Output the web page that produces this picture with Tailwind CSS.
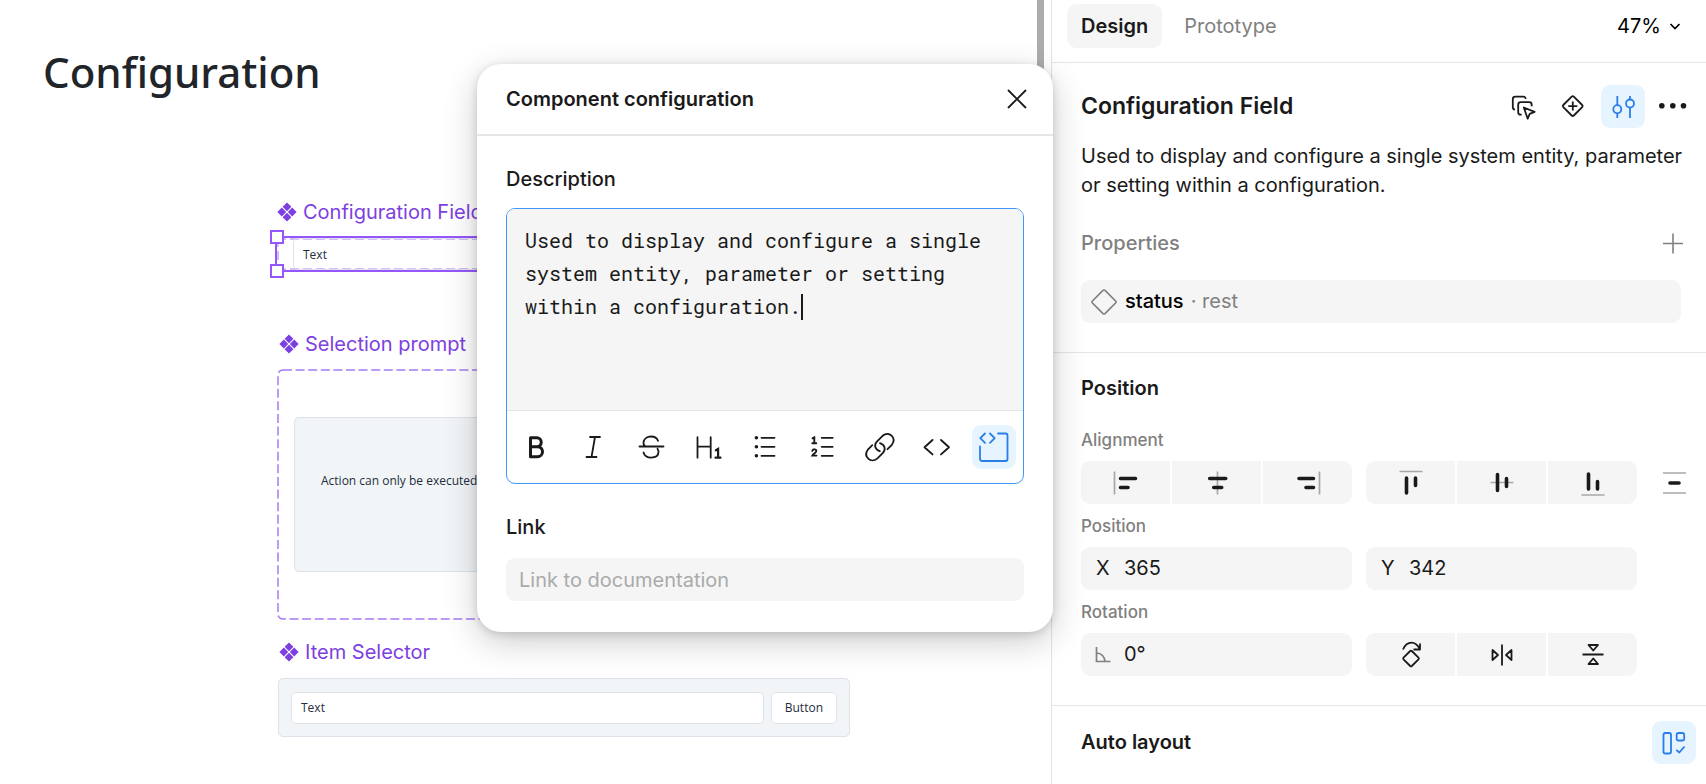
<!DOCTYPE html>
<html lang="en">
<head>
  <meta charset="UTF-8">
  <meta name="viewport" content="width=device-width, initial-scale=1.0">
  <title>Configuration</title>
  <script src="https://cdn.jsdelivr.net/npm/@tailwindcss/browser@4"></script>
</head>
<body class="bg-white font-[Inter,sans-serif] text-[#1a1a1a]">
  <!-- shared symbols -->
  <svg class="hidden">
    <symbol id="component" viewBox="0 0 20 20">
      <path d="M10 .4l4.4 4.4L10 9.2 5.6 4.800zM10 10.800l4.400 4.400-4.400 4.400-4.400-4.400zM4.800 5.600L9.200 10l-4.400 4.400L.4 10zM15.200 5.600l4.400 4.400-4.400 4.400-4.400-4.400z" fill="currentColor"/>
    </symbol>
  </svg>

  <div class="relative flex h-screen overflow-hidden">

    <!-- Canvas -->
    <main class="relative flex-1 overflow-hidden">
      <h1 class="absolute left-[43px] top-[42px] font-['Noto_Sans',sans-serif] text-[42px] leading-[60px] font-medium text-[#212529]">Configuration</h1>

      <section>
        <h2 class="absolute left-[277px] top-[198px] flex items-center gap-[6px] text-[20px] leading-[28px] whitespace-nowrap text-[#7d40e0]">
          <svg class="size-5"><use href="#component"/></svg>Configuration Field
        </h2>
        <div class="absolute left-[275px] top-[236px] h-[36px] w-[575px] border-2 border-[#9557fb]">
          <svg class="absolute inset-0 h-full w-full" fill="none" stroke="#a67bf5"><path d="M0 1h575M0 31h575M1 0v32" stroke-dasharray="9 4"/></svg>
          <label class="absolute left-[16px] top-0 flex h-[32px] w-[540px] items-center rounded-[5px] border border-[#dfe1e8] pt-[2px] pl-[9px]">
            <input type="text" value="Text" aria-label="Field value" class="w-full font-['Open_Sans',sans-serif] text-[12px] leading-[16px] text-[#1f2d3d] outline-none">
          </label>
          <span class="absolute -left-[7px] -top-[8px] size-[14px] border-2 border-[#9557fb] bg-white"></span>
          <span class="absolute -left-[7px] -bottom-[8px] size-[14px] border-2 border-[#9557fb] bg-white"></span>
        </div>
      </section>

      <section>
        <h2 class="absolute left-[279px] top-[330px] flex items-center gap-[6px] text-[20px] leading-[28px] whitespace-nowrap text-[#7d40e0]">
          <svg class="size-5"><use href="#component"/></svg>Selection prompt
        </h2>
        <div class="absolute left-[277px] top-[369px] h-[251px] w-[573px] px-[17px] py-[48px]">
          <svg class="absolute inset-0 h-full w-full" viewBox="0 0 573 251" fill="none" stroke="#a67bf5" stroke-width="1.500"><rect x="1" y="1" width="571" height="249" rx="5" stroke-dasharray="9 3.600"/></svg>
          <div class="flex h-full items-center rounded-[5px] border border-[#dfe1e8] bg-[#f1f5f8] px-[26px] pb-[28px]">
            <p class="font-['Open_Sans',sans-serif] text-[12px] leading-[16px] text-[#1f2d3d]">Action can only be executed</p>
          </div>
        </div>
      </section>

      <section>
        <h2 class="absolute left-[279px] top-[638px] flex items-center gap-[6px] text-[20px] leading-[28px] whitespace-nowrap text-[#7d40e0]">
          <svg class="size-5"><use href="#component"/></svg>Item Selector
        </h2>
        <div class="absolute left-[278px] top-[678px] flex h-[59px] w-[572px] items-center gap-[7px] rounded-[5px] border border-[#dfe1e8] bg-[#f1f5f8] px-[12px] font-['Open_Sans',sans-serif] text-[12px] leading-[16px] text-[#1f2d3d]">
          <input type="text" value="Text" aria-label="Item" class="h-[32px] min-w-0 flex-1 rounded-[5px] border border-[#dfe1e8] bg-white px-[9px] outline-none">
          <button class="h-[32px] rounded-[5px] border border-[#dfe1e8] bg-white px-[13px]">Button</button>
        </div>
      </section>

      <div class="absolute right-[7px] top-0 h-[100px] w-[7px] bg-[#acacac]"></div>
    </main>

    <!-- Properties panel -->
    <aside class="w-[655px] shrink-0 border-l border-[#e2e2e2] text-[20px] leading-[29px]">
      <header class="flex h-[63px] items-start justify-between border-b border-[#e6e6e6] pl-[15px] pr-[23px] pt-1">
        <nav class="flex gap-2">
          <button class="h-11 rounded-[9px] bg-[#f5f5f5] px-[14px] font-semibold">Design</button>
          <button class="h-11 px-[14px] text-[#808080]">Prototype</button>
        </nav>
        <button class="flex h-11 items-center gap-[6px] text-black">47%
          <svg class="size-[16px]" viewBox="0 0 16 16" fill="none" stroke="currentColor" stroke-width="1.700"><path d="M3.500 6l4.500 4.500L12.500 6"/></svg>
        </button>
      </header>

      <section class="border-b border-[#e6e6e6] pl-[29px] pr-[11px] pt-[22px] pb-[29px]">
        <div class="flex h-[43px] items-center justify-between">
          <h2 class="text-[23px] font-semibold">Configuration Field</h2>
          <div class="flex gap-[6px]">
            <button aria-label="Select matching" class="h-[43px] w-11">
              <svg class="w-full" viewBox="0 0 44 43" fill="none" stroke="currentColor" stroke-width="1.800" stroke-linejoin="round"><path d="M14 24.700c-1.300-.2-2.200-1.200-2.200-2.500v-8c0-1.400 1.100-2.500 2.500-2.500h8c1.300 0 2.300.9 2.500 2.200M20.700 29.700h-1c-1.400 0-2.500-1.100-2.500-2.500v-7.500c0-1.400 1.100-2.500 2.500-2.500h8.500c1.400 0 2.500 1.100 2.500 2.500v1.500M22.800 22.500l10.800 4.300-4.900 2.100-2 4.800z"/></svg>
            </button>
            <button aria-label="Add variant" class="h-[43px] w-11">
              <svg class="w-full" viewBox="0 0 44 43" fill="none" stroke="currentColor" stroke-width="1.800"><path d="M20.700 11.600a1.500 1.500 0 012.100 0l8.400 8.400a1.500 1.500 0 010 2.100l-8.400 8.400a1.500 1.500 0 01-2.100 0L12.300 22.100a1.500 1.500 0 010-2.100zM21.800 16.600v9M17.300 21.100h9"/></svg>
            </button>
            <button aria-label="Component configuration" class="h-[43px] w-11 rounded-[9px] bg-[#e5f4ff] text-[#2b7de9]">
              <svg class="w-full" viewBox="0 0 44 43" fill="none" stroke="currentColor" stroke-width="1.800"><path d="M16.300 11v9M16.300 28v5M29 11v3.500M29 22.500V33"/><circle cx="16.300" cy="24.200" r="4"/><circle cx="29" cy="18.500" r="4"/></svg>
            </button>
            <button aria-label="More" class="h-[43px] w-11">
              <svg class="w-full" viewBox="0 0 44 43" fill="currentColor"><circle cx="10.800" cy="20.800" r="2.800"/><circle cx="21.800" cy="20.800" r="2.800"/><circle cx="32.500" cy="20.800" r="2.800"/></svg>
            </button>
          </div>
        </div>
        <p class="mt-[14px]">Used to display and configure a single system entity, parameter or setting within a configuration.</p>
        <div class="mt-[22px] flex h-[43px] items-center justify-between text-[#808080]">
          <h3 class="font-medium">Properties</h3>
          <button aria-label="Add property" class="h-[43px] w-11">
            <svg class="w-full" viewBox="0 0 44 43" fill="none" stroke="currentColor" stroke-width="1.600"><path d="M22 11.500v20M12 21.500h20"/></svg>
          </button>
        </div>
        <button class="mt-[15px] flex h-[43px] w-[calc(100%-14px)] items-center rounded-[9px] bg-[#f5f5f5] pl-[10px]">
          <svg class="mr-[8px] size-[26px] text-[#808080]" viewBox="0 0 26 26" fill="none" stroke="currentColor" stroke-width="1.700"><path d="M12 1.400a1.400 1.400 0 012 0L24.600 12a1.400 1.400 0 010 2L14 24.600a1.400 1.400 0 01-2 0L1.400 14a1.400 1.400 0 010-2z"/></svg>
          <span class="font-medium text-black">status</span>
          <span class="ml-[7px] text-[#808080]">· rest</span>
        </button>
      </section>

      <section class="border-b border-[#e6e6e6] pl-[29px] pr-[11px] pt-[13px] pb-[29px]">
        <h2 class="mb-2 flex h-11 items-center font-semibold">Position</h2>

        <h3 class="flex h-[43px] items-center pt-[2px] text-[17px] font-medium text-[#808080]">Alignment</h3>
        <div class="grid grid-cols-[minmax(0,1fr)_minmax(0,1fr)_44px] gap-x-[14px]">
          <div class="flex gap-0.5 overflow-hidden rounded-[9px]">
            <button aria-label="Align left" class="flex h-[43px] flex-1 items-center justify-center bg-[#f5f5f5]">
              <svg class="size-11" viewBox="0 0 44 44" fill="none" stroke-linecap="round"><path d="M10.500 10.500v23" stroke="#a8a8a8" stroke-width="1.700" stroke-linecap="butt"/><path d="M16.500 17.500h15M16.500 26.500h7.500" stroke="#1a1a1a" stroke-width="3.600"/></svg>
            </button>
            <button aria-label="Align horizontal centers" class="flex h-[43px] flex-1 items-center justify-center bg-[#f5f5f5]">
              <svg class="size-11" viewBox="0 0 44 44" fill="none" stroke-linecap="round"><path d="M22.500 10.500v23" stroke="#a8a8a8" stroke-width="1.700" stroke-linecap="butt"/><path d="M14.700 17.500h16M18.700 26.500h8" stroke="#1a1a1a" stroke-width="3.600"/></svg>
            </button>
            <button aria-label="Align right" class="flex h-[43px] flex-1 items-center justify-center bg-[#f5f5f5]">
              <svg class="size-11" viewBox="0 0 44 44" fill="none" stroke-linecap="round"><path d="M33.500 10.500v23" stroke="#a8a8a8" stroke-width="1.700" stroke-linecap="butt"/><path d="M13 17.500h14.500M20 26.500h7.500" stroke="#1a1a1a" stroke-width="3.600"/></svg>
            </button>
          </div>
          <div class="flex gap-0.5 overflow-hidden rounded-[9px]">
            <button aria-label="Align top" class="flex h-[43px] flex-1 items-center justify-center bg-[#f5f5f5]">
              <svg class="size-11" viewBox="0 0 44 44" fill="none" stroke-linecap="round"><path d="M10.500 10.500h23" stroke="#a8a8a8" stroke-width="1.700" stroke-linecap="butt"/><path d="M17.500 17v15M26.500 17v7.500" stroke="#1a1a1a" stroke-width="3.600"/></svg>
            </button>
            <button aria-label="Align vertical centers" class="flex h-[43px] flex-1 items-center justify-center bg-[#f5f5f5]">
              <svg class="size-11" viewBox="0 0 44 44" fill="none" stroke-linecap="round"><path d="M10.500 21.500h23" stroke="#a8a8a8" stroke-width="1.700" stroke-linecap="butt"/><path d="M17.500 13.500v16M26.500 17.500v8" stroke="#1a1a1a" stroke-width="3.600"/></svg>
            </button>
            <button aria-label="Align bottom" class="flex h-[43px] flex-1 items-center justify-center bg-[#f5f5f5]">
              <svg class="size-11" viewBox="0 0 44 44" fill="none" stroke-linecap="round"><path d="M10.500 34h23" stroke="#a8a8a8" stroke-width="1.700" stroke-linecap="butt"/><path d="M17.500 13v15M26.500 20.500v7.500" stroke="#1a1a1a" stroke-width="3.600"/></svg>
            </button>
          </div>
          <button aria-label="Distribute" class="flex h-[43px] items-center justify-center">
            <svg class="size-11" viewBox="0 0 44 44" fill="none" stroke-linecap="round"><path d="M12 12h23M12 32h23" stroke="#a8a8a8" stroke-width="1.700" stroke-linecap="butt"/><path d="M19 22h9" stroke="#1a1a1a" stroke-width="3.600"/></svg>
          </button>
        </div>

        <h3 class="flex h-[43px] items-center pt-[2px] text-[17px] font-medium text-[#808080]">Position</h3>
        <div class="grid grid-cols-[minmax(0,1fr)_minmax(0,1fr)_44px] gap-x-[14px]">
          <label class="flex h-[43px] items-center rounded-[9px] bg-[#f5f5f5] pl-[15px]">
            <span class="w-[28px]">X</span>
            <input type="text" value="365" class="min-w-0 flex-1 outline-none">
          </label>
          <label class="flex h-[43px] items-center rounded-[9px] bg-[#f5f5f5] pl-[15px]">
            <span class="w-[28px]">Y</span>
            <input type="text" value="342" class="min-w-0 flex-1 outline-none">
          </label>
        </div>

        <h3 class="flex h-[43px] items-center pt-[2px] text-[17px] font-medium text-[#808080]">Rotation</h3>
        <div class="grid grid-cols-[minmax(0,1fr)_minmax(0,1fr)_44px] gap-x-[14px]">
          <label class="flex h-[43px] items-center rounded-[9px] bg-[#f5f5f5] pl-[13px]">
            <svg class="mr-[12px] size-[18px] text-[#808080]" viewBox="0 0 18 18" fill="none" stroke="currentColor" stroke-width="1.700"><path d="M2.500 1v14.500h14M2.500 7a8.500 8.500 0 018.500 8.500"/></svg>
            <input type="text" value="0°" aria-label="Rotation" class="min-w-0 flex-1 outline-none">
          </label>
          <div class="flex gap-0.5 overflow-hidden rounded-[9px]">
            <button aria-label="Rotate 90° right" class="flex h-[43px] flex-1 items-center justify-center bg-[#f5f5f5]">
              <svg class="size-11" viewBox="0 0 44 44" fill="none" stroke="currentColor" stroke-width="1.800" stroke-linejoin="round"><path d="M21.200 18a1.200 1.200 0 011.600 0l6.700 6.700a1.200 1.200 0 010 1.600L22.800 33a1.200 1.200 0 01-1.600 0l-6.700-6.700a1.200 1.200 0 010-1.600zM14 16.500c2-4.500 5-6.800 8.500-6.800 3.200 0 6 2 8.200 6.300M31 10.500v6h-6.500"/></svg>
            </button>
            <button aria-label="Flip horizontal" class="flex h-[43px] flex-1 items-center justify-center bg-[#f5f5f5]">
              <svg class="size-11" viewBox="0 0 44 44" fill="none" stroke="currentColor" stroke-width="1.800" stroke-linejoin="round"><path d="M22 11.500v21M12.500 17v10l5.500-5zM31.500 17v10L26 22z"/></svg>
            </button>
            <button aria-label="Flip vertical" class="flex h-[43px] flex-1 items-center justify-center bg-[#f5f5f5]">
              <svg class="size-11" viewBox="0 0 44 44" fill="none" stroke="currentColor" stroke-width="1.800" stroke-linejoin="round"><path d="M11.500 21.500h21M17.500 12h9.500l-4.700 5.500zM17.500 31h9.500l-4.700-5.500z"/></svg>
            </button>
          </div>
        </div>
      </section>

      <section class="flex items-center justify-between pl-[29px] pr-[10px] pt-[15px]">
        <h2 class="font-semibold">Auto layout</h2>
        <button aria-label="Use auto layout" class="h-[43px] w-11 rounded-[9px] bg-[#e5f4ff] text-[#2b7de9]">
          <svg class="w-full" viewBox="0 0 44 43" fill="none" stroke="currentColor" stroke-width="1.800" stroke-linejoin="round"><rect x="11.500" y="12" width="7.500" height="20.500" rx="1.800"/><rect x="24.700" y="12" width="7.500" height="7.500" rx="1.800"/><path d="M24.300 28.800l3 2.700 5.200-6"/></svg>
        </button>
      </section>
    </aside>

    <!-- Component configuration dialog -->
    <div role="dialog" aria-labelledby="dialog-title" class="absolute right-[653px] top-[64px] w-[576px] rounded-[24px] bg-white text-[20px] leading-[29px] shadow-[0_10px_34px_rgba(0,0,0,0.2),0_2px_8px_rgba(0,0,0,0.14)]">
      <header class="flex h-[72px] items-center justify-between border-b-2 border-[#e6e6e6] pl-[29px] pr-[14px]">
        <h2 id="dialog-title" class="font-semibold">Component configuration</h2>
        <button aria-label="Close" class="size-11">
          <svg class="w-full" viewBox="0 0 44 44" fill="none" stroke="currentColor" stroke-width="1.800"><path d="M13 13l18 18M31 13L13 31"/></svg>
        </button>
      </header>

      <div class="px-[29px] pt-[29px] pb-[31px]">
        <label for="description" class="block font-medium">Description</label>
        <div class="relative mt-[14px] overflow-hidden rounded-[9px] border border-[#3f98f5]">
          <textarea id="description" class="block h-[201px] w-full resize-none bg-[#f5f5f5] px-[18px] pt-[15px] font-['Roboto_Mono','DejaVu_Sans_Mono',monospace] text-[20px] leading-[33px] outline-none">Used to display and configure a single system entity, parameter or setting within a configuration.</textarea>
          <span class="absolute left-[294px] top-[85px] h-[26px] w-[2px] bg-[#1a1a1a]"></span>
          <div class="flex h-[73px] items-center justify-between border-t border-[#e6e6e6] px-[7px]">
            <button aria-label="Bold" class="size-11"><svg viewBox="0 0 44 44" fill="none" stroke="currentColor" stroke-width="3" stroke-linejoin="round"><path d="M16.500 12.800h6.300a4.300 4.300 0 010 8.900h-6.300zM16.500 21.700h7a5 5 0 010 10h-7z"/></svg></button>
            <button aria-label="Italic" class="size-11"><svg viewBox="0 0 44 44" fill="none" stroke="currentColor" stroke-width="1.800" stroke-linecap="round"><path d="M19 12h10M15.500 32h10M24 12l-3.500 20"/></svg></button>
            <button aria-label="Strikethrough" class="size-11"><svg viewBox="0 0 44 44" fill="none" stroke="currentColor" stroke-width="1.800" stroke-linecap="round"><path d="M10.500 21.500h24M15.800 21c-1.200-1.200-1.500-2.200-1.300-3.600.4-3.400 3.400-5.900 7.700-5.900 3.300 0 5.800 1.500 6.800 4.300M14.500 27.500c.8 3.100 3.800 5.100 7.700 5.100 4.500 0 7.300-2.300 7.300-5.800 0-1.200-.3-2.100-1-3"/></svg></button>
            <button aria-label="Heading" class="size-11"><svg viewBox="0 0 44 44" fill="none" stroke="currentColor" stroke-width="1.800" stroke-linecap="round"><path d="M11.500 12.200v20.500M24.700 12.200v20.500M11.500 21.700h13.200"/><path d="M29.800 25.300l2.300-1.300v8.700M29.500 32.700h5" stroke-width="2.200"/></svg></button>
            <button aria-label="Bulleted list" class="size-11"><svg viewBox="0 0 44 44" fill="none" stroke="currentColor" stroke-width="1.800" stroke-linecap="round"><path d="M18.500 12.800h13M18.500 21.800h13M18.500 30.800h13"/><path d="M13.400 12.800h0M13.400 21.800h0M13.400 30.800h0" stroke-width="3.600"/></svg></button>
            <button aria-label="Numbered list" class="size-11"><svg viewBox="0 0 44 44" fill="none" stroke="currentColor" stroke-width="1.800" stroke-linecap="round"><path d="M21.700 12.800h11M21.700 21.800h11M21.700 30.800h11"/><path d="M12.500 13.300l1.800-.9v5.800M12.300 18.300h4M12.300 26c.3-2.300 4.200-2.200 4 .1 0 1.700-3 2.700-4 4.500h4.200" stroke-width="1.900"/></svg></button>
            <button aria-label="Link" class="size-11"><svg viewBox="0 0 44 44" fill="none" stroke="currentColor" stroke-width="1.800" stroke-linecap="round"><path d="M21.800 26.200c-5.300-2-6-6.600-2.700-9.900l5.500-5.500c6.500-5.300 14.300 2 9.300 9l-4.400 4.400M22 18.200c5.300 2 6 6.600 2.700 9.900l-5.500 5.500c-6.500 5.300-14.300-2-9.300-9l4.400-4.400"/></svg></button>
            <button aria-label="Code" class="size-11"><svg viewBox="0 0 44 44" fill="none" stroke="currentColor" stroke-width="1.900" stroke-linecap="round" stroke-linejoin="round"><path d="M17.500 15l-8 7.200 8 7.200M26 15l8 7.200-8 7.200"/></svg></button>
            <button aria-label="Code block" class="size-11 rounded-[9px] bg-[#e5f4ff] text-[#2b7de9]"><svg viewBox="0 0 44 44" fill="none" stroke="currentColor" stroke-width="1.800" stroke-linecap="round" stroke-linejoin="round"><path d="M26 8.500h7.500a2 2 0 012 2v23.500a2 2 0 01-2 2H10a2 2 0 01-2-2V21.500M13 8.500l-4.700 4.700 4.700 4.700M18 8.500l4.700 4.700-4.700 4.700"/></svg></button>
          </div>
        </div>
        <label for="link" class="mt-[29px] block font-medium">Link</label>
        <input id="link" type="text" placeholder="Link to documentation" class="mt-[16px] block h-[43px] w-full rounded-[9px] bg-[#f5f5f5] px-[13px] outline-none placeholder:text-[#aaaaaa]">
      </div>
    </div>
  </div>
</body>
</html>
